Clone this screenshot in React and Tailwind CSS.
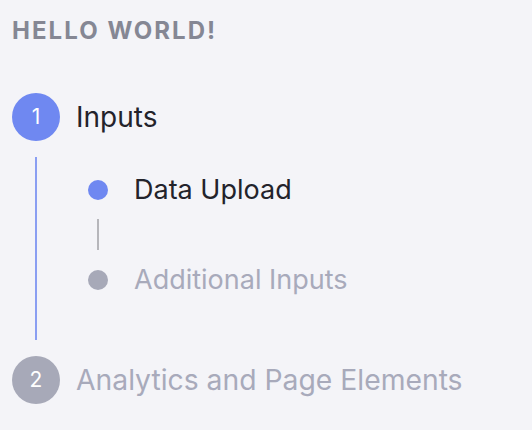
export default function App() {
  const font = { fontFamily: "Inter, 'Noto Sans', sans-serif" };

  return (
    <div className="w-[532px] h-[430px] bg-[#f4f4f8] px-3 pt-[15px] overflow-hidden" style={font}>
      {/* Title */}
      <div className="h-8 leading-8 text-[24px] font-bold tracking-[0.085em] text-[#858794]">HELLO WORLD!</div>

      {/* Step 1 */}
      <div className="mt-[46px] flex items-center h-12">
        <div className="w-12 h-12 rounded-full bg-[#6f88f1] text-white flex items-center justify-center text-[21px]">1</div>
        <span className="ml-4 text-[28px] text-[#23232b]">Inputs</span>
      </div>

      {/* Sub steps */}
      <div className="flex">
        <div className="w-12 flex justify-center py-4">
          <div className="w-[1.5px] bg-[#8a9ef2]" />
        </div>
        <div className="ml-[28px] pt-[31px] pb-[58px]">
          <div className="flex items-center h-9">
            <div className="w-5 h-5 rounded-full bg-[#6f88f1]" />
            <span className="ml-[26px] text-[27px] text-[#23232b]">Data Upload</span>
          </div>
          <div className="h-[54px] w-5 flex justify-center">
            <div className="mt-[11px] h-[31px] w-[1.5px] bg-[#b6b6bb]" />
          </div>
          <div className="flex items-center h-9">
            <div className="w-5 h-5 rounded-full bg-[#a7a9b8]" />
            <span className="ml-[26px] text-[27px] text-[#a8aabb]">Additional Inputs</span>
          </div>
        </div>
      </div>

      {/* Step 2 */}
      <div className="flex items-center h-12">
        <div className="w-12 h-12 rounded-full bg-[#a7a9b8] text-white flex items-center justify-center text-[21px]">2</div>
        <span className="ml-4 text-[28.3px] text-[#a8aabb]">Analytics and Page Elements</span>
      </div>
    </div>
  );
}
